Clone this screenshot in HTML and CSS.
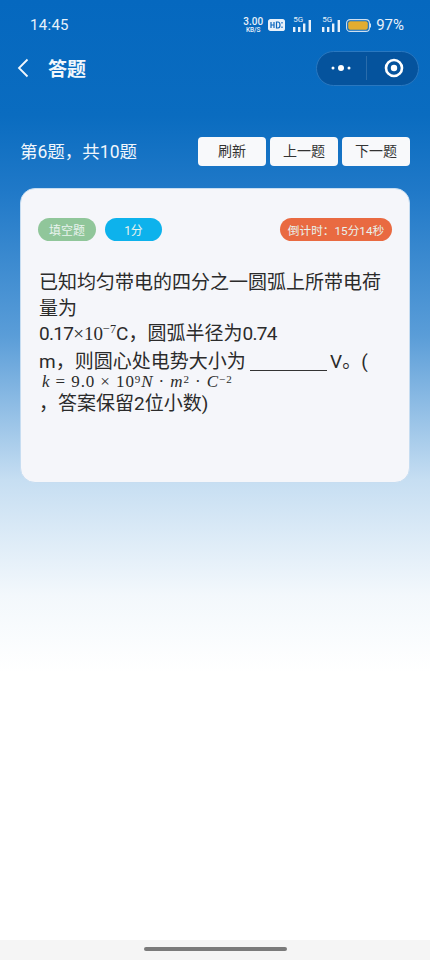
FILE: index.html
```html
<!DOCTYPE html>
<html lang="zh-CN">
<head>
    <meta charset="UTF-8">
    <meta name="viewport" content="width=device-width, initial-scale=1.0">
    <title>答题</title>
    <link rel="stylesheet" href="styles.css">
</head>
<body>
    <div class="page">
        <div class="status-bar">
            <span class="time">14:45</span>
            <div class="status-icons">
                <span class="speed">3.00<small>KB/S</small></span>
                <svg class="hd" width="17" height="12" viewBox="0 0 17 12">
                    <rect x="0.6" y="0.6" width="15.8" height="10.8" rx="2" fill="#e8f1fa" stroke="#e8f1fa" stroke-width="1.2"/>
                    <path d="M3 3v6M3 6h3M6 3v6M8.5 3v6h1.5a2 3 0 0 0 0-6z" fill="none" stroke="#0a66bd" stroke-width="1.2"/>
                    <path d="M14 3v1.5M14 7.5V9" stroke="#0a66bd" stroke-width="1.2"/>
                </svg>
                <span class="signal">
                    <span class="five-g">5G</span>
                    <svg width="18" height="12" viewBox="0 0 18 12"><path d="M0 7h2.4v5H0zM5 7h2.4v5H5zM10 3.500h2.400V12H10zM15.600 0H18v12h-2.400z" fill="#e8f1fa"/></svg>
                </span>
                <span class="signal">
                    <span class="five-g">5G</span>
                    <svg width="18" height="12" viewBox="0 0 18 12"><path d="M0 7h2.4v5H0zM5 7h2.4v5H5zM10 3.500h2.400V12H10zM15.600 0H18v12h-2.400z" fill="#e8f1fa"/></svg>
                </span>
                <svg width="25" height="13" viewBox="0 0 25 13">
                    <rect x="0.6" y="0.6" width="22.8" height="11.8" rx="3.5" fill="none" stroke="#cfe0f0" stroke-width="1.1"/>
                    <rect x="2.2" y="2.2" width="19.6" height="8.6" rx="2" fill="#e2ad30"/>
                    <rect x="24" y="4.5" width="1" height="4" fill="#cfe0f0"/>
                </svg>
                <span class="battery-text">97%</span>
            </div>
        </div>

        <div class="nav-bar">
            <svg class="back" width="12" height="20" viewBox="0 0 12 20"><path d="M10.5 1.500 2 10l8.500 8.500" fill="none" stroke="#f2f7fc" stroke-width="1.8"/></svg>
            <span class="nav-title">答题</span>
            <div class="capsule">
                <span class="capsule-part">
                    <svg width="20" height="8" viewBox="0 0 20 8"><circle cx="2" cy="4" r="1.500" fill="#fff"/><circle cx="10" cy="4" r="3" fill="#fff"/><circle cx="18" cy="4" r="1.500" fill="#fff"/></svg>
                </span>
                <span class="capsule-part capsule-right">
                    <svg width="20" height="20" viewBox="0 0 20 20"><circle cx="10" cy="10" r="8" fill="none" stroke="#fff" stroke-width="2.600"/><circle cx="10" cy="10" r="3.200" fill="#fff"/></svg>
                </span>
            </div>
        </div>

        <div class="progress-row">
            <span class="progress-text">第6题，共10题</span>
            <div class="actions">
                <button class="btn">刷新</button>
                <button class="btn">上一题</button>
                <button class="btn">下一题</button>
            </div>
        </div>

        <section class="card">
            <div class="tags">
                <span class="tag tag-type">填空题</span>
                <span class="tag tag-score">1分</span>
                <span class="tag tag-timer">倒计时：15分14秒</span>
            </div>
            <div class="question">
                <p class="line">已知均匀带电的四分之一圆弧上所带电荷</p>
                <p class="line">量为</p>
                <p class="line"><span class="num">0.17</span><span class="math">×10<sup>−7</sup></span>C，圆弧半径为<span class="num">0.74</span></p>
                <p class="line line-blank">m，则圆心处电势大小为 <span class="blank"></span> V。(</p>
                <p class="line formula"><i>k</i> = 9.0 × 10<sup>9</sup><i>N</i> · <i>m</i><sup>2</sup> · <i>C</i><sup>−2</sup></p>
                <p class="line">，答案保留2位小数)</p>
            </div>
        </section>

        <div class="home-bar"><span class="home-indicator"></span></div>
    </div>
</body>
</html>
```

FILE: styles.css
```css
* {
    box-sizing: border-box;
}

body {
    margin: 0;
    font-family: Roboto, "Noto Sans CJK SC", sans-serif;
    color: #2b2b2b;
}

.page {
    display: flex;
    flex-direction: column;
    height: 960px;
    overflow: hidden;
    background: linear-gradient(180deg, #0568bf 0%, #0a6cc0 12%, #2079c8 20%, #5a9dd8 35%, #c6def2 50%, #f3f8fc 62%, #ffffff 70%);
}

.status-bar {
    display: flex;
    align-items: center;
    justify-content: space-between;
    height: 50px;
    padding: 0 26px 0 30px;
    color: #e8f1fa;
}

.time {
    font-size: 15px;
    letter-spacing: 0.3px;
}

.status-icons {
    display: flex;
    align-items: center;
    gap: 5px;
}

.speed {
    display: flex;
    flex-direction: column;
    align-items: center;
    font-size: 10px;
    font-weight: 500;
    line-height: 10px;
}

.speed small {
    font-size: 6.500px;
    line-height: 6px;
}

.signal {
    display: flex;
    align-items: flex-end;
    position: relative;
    width: 18px;
    height: 14px;
    margin: 0 1px 0 3px;
}

.signal + .signal {
    margin-left: 5px;
}

.five-g {
    position: absolute;
    left: 0;
    top: -3px;
    font-size: 8px;
    line-height: 9px;
}

.battery-text {
    font-size: 15px;
}

.nav-bar {
    display: flex;
    align-items: center;
    height: 36px;
    padding: 0 11px 0 17px;
}

.nav-title {
    margin-left: 19px;
    padding-bottom: 2px;
    font-size: 19px;
    font-weight: 700;
    color: #f2f7fc;
}

.capsule {
    display: flex;
    align-items: center;
    width: 103px;
    height: 35px;
    margin-left: auto;
    background: #05539d;
    border: 1px solid #2a78c0;
    border-radius: 18px;
}

.capsule-part {
    display: flex;
    align-items: center;
    justify-content: center;
    flex: 1;
    height: 24px;
}

.capsule-right {
    padding-left: 3px;
    border-left: 1px solid #2a6cab;
}

.progress-row {
    display: flex;
    align-items: center;
    justify-content: space-between;
    height: 29px;
    margin-top: 51px;
    padding: 0 20px;
}

.progress-text {
    padding-bottom: 3px;
    font-size: 17.500px;
    color: #f0f6fc;
}

.actions {
    display: flex;
    gap: 4px;
}

.btn {
    width: 68px;
    height: 29px;
    padding: 0 0 3px;
    font-family: inherit;
    font-size: 14px;
    color: #333;
    background: #f8f9fb;
    border: none;
    border-radius: 4px;
}

.card {
    height: 295px;
    margin: 22px 20px 0;
    padding: 29px 17px 0;
    background: #f5f6fa;
    border: 1px solid #c7ddf1;
    border-radius: 15px;
}

.tags {
    display: flex;
    gap: 9px;
}

.tag {
    display: flex;
    align-items: center;
    justify-content: center;
    height: 23px;
    padding-bottom: 1px;
    font-size: 12px;
    color: #e8f3ee;
    border-radius: 12px;
}

.tag-type {
    width: 58px;
    background: #90c69a;
}

.tag-score {
    width: 57px;
    background: #0db2ec;
}

.tag-timer {
    width: 112px;
    margin-left: auto;
    font-size: 11.700px;
    background: #e96a41;
}

.question {
    margin: 29px 0 0 1px;
    font-size: 19px;
}

.line {
    margin: 0;
    height: 25.500px;
    line-height: 25.500px;
    white-space: nowrap;
}

.num {
    letter-spacing: -0.7px;
}

.math {
    font-family: "Liberation Serif", serif;
}

.math sup,
.formula sup {
    font-size: 0.65em;
    line-height: 0;
}

.formula sup {
    vertical-align: 4px;
}

.line-blank {
    height: 23.500px;
    margin-top: 2px;
}

.blank {
    display: inline-block;
    width: 77px;
    height: 1px;
    margin-right: -2px;
    border-bottom: 1.500px solid #333;
    vertical-align: -3px;
}

.formula {
    height: 19px;
    padding-left: 3px;
    font-family: "Liberation Serif", serif;
    font-size: 17px;
    letter-spacing: 0.9px;
    line-height: 19px;
}

.home-bar {
    display: flex;
    align-items: center;
    justify-content: center;
    height: 20px;
    margin-top: auto;
    background: #f5f5f5;
}

.home-indicator {
    width: 143px;
    height: 4px;
    margin-bottom: 2px;
    background: #7b7b7b;
    border-radius: 2px;
}
```
